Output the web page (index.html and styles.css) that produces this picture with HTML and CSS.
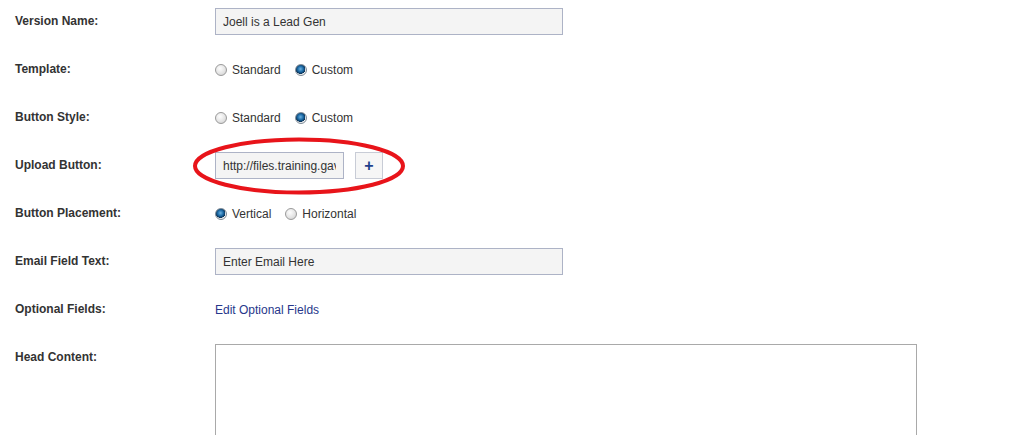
FILE: index.html
```html
<!DOCTYPE html>
<html>
<head>
<meta charset="utf-8">
<link rel="stylesheet" href="styles.css">
</head>
<body>
<form class="form">
  <div class="row">
    <label class="label">Version Name:</label>
    <div class="field"><input class="text wide" type="text" value="Joell is a Lead Gen"></div>
  </div>
  <div class="row">
    <label class="label">Template:</label>
    <div class="field radios">
      <label class="opt"><input class="radio" type="radio" name="tpl"> Standard</label>
      <label class="opt"><input class="radio" type="radio" name="tpl" checked> Custom</label>
    </div>
  </div>
  <div class="row">
    <label class="label">Button Style:</label>
    <div class="field radios">
      <label class="opt"><input class="radio" type="radio" name="bs"> Standard</label>
      <label class="opt"><input class="radio" type="radio" name="bs" checked> Custom</label>
    </div>
  </div>
  <div class="row">
    <label class="label">Upload Button:</label>
    <div class="field upload">
      <input class="text short" type="text" value="http://files.training.gavin.com/button.png">
      <button class="plus" type="button">+</button>
      <svg class="circle" width="216" height="60" viewBox="0 0 216 60"><ellipse cx="108" cy="30" rx="104" ry="26.5" fill="none" stroke="#e8141a" stroke-width="4"/></svg>
    </div>
  </div>
  <div class="row">
    <label class="label">Button Placement:</label>
    <div class="field radios">
      <label class="opt"><input class="radio" type="radio" name="bp" checked> Vertical</label>
      <label class="opt"><input class="radio" type="radio" name="bp"> Horizontal</label>
    </div>
  </div>
  <div class="row">
    <label class="label">Email Field Text:</label>
    <div class="field"><input class="text wide" type="text" value="Enter Email Here"></div>
  </div>
  <div class="row">
    <label class="label">Optional Fields:</label>
    <div class="field"><a class="link" href="#">Edit Optional Fields</a></div>
  </div>
  <div class="row">
    <label class="label">Head Content:</label>
    <div class="field"><textarea class="area"></textarea></div>
  </div>
</form>
</body>
</html>
```
FILE: styles.css
```css
html, body {
  margin: 0;
  padding: 0;
  background: #fff;
}
body {
  font-family: "Liberation Sans", Arial, sans-serif;
  font-size: 12px;
  color: #333;
}
.form {
  padding: 8px 15px 0 15px;
  display: flex;
  flex-direction: column;
  gap: 21px;
}
.row {
  display: grid;
  grid-template-columns: 200px 1fr;
  align-items: start;
}
.label {
  font-weight: bold;
  line-height: 27px;
  color: #333;
}
.field {
  min-height: 27px;
  display: flex;
  align-items: center;
}
.text {
  box-sizing: border-box;
  height: 27px;
  margin: 0;
  border: 1px solid #adb3c6;
  background: #f4f4f4;
  padding: 0 7px;
  font-family: "Liberation Sans", Arial, sans-serif;
  font-size: 12px;
  color: #333;
  outline: none;
}
.wide { width: 348px; }
.short { width: 129px; }
.radios { gap: 14px; }
.opt {
  display: flex;
  align-items: center;
  gap: 5px;
  color: #333;
}
.radio {
  appearance: none;
  -webkit-appearance: none;
  margin: 0;
  width: 12px;
  height: 12px;
  border-radius: 50%;
  border: 1px solid #9a9a9a;
  background: radial-gradient(circle at 40% 35%, #fdfdfd 0%, #e2e2e2 60%, #c8c8c8 100%);
  box-sizing: border-box;
}
.radio:checked {
  border-color: #7d8a96;
  background:
    radial-gradient(circle at 45% 40%, #6fb2e0 0%, #1b6aa6 35%, #0b3358 58%, transparent 62%),
    radial-gradient(circle, #ffffff 0%, #e6e6e6 100%);
}
.upload {
  position: relative;
  gap: 11px;
}
.plus {
  box-sizing: border-box;
  width: 28px;
  height: 27px;
  margin: 0;
  padding: 0;
  border: 1px solid #c8ccd6;
  background: #f6f6f6;
  color: #1f3f8c;
  font-family: "Liberation Sans", Arial, sans-serif;
  font-size: 16px;
  font-weight: bold;
  line-height: 25px;
}
.circle {
  position: absolute;
  left: -24px;
  top: -16px;
  pointer-events: none;
}
.link {
  color: #27378b;
  text-decoration: none;
}
.area {
  box-sizing: border-box;
  width: 702px;
  height: 140px;
  margin: 0;
  border: 1px solid #a9a9a9;
  background: #fff;
  resize: none;
}
```
